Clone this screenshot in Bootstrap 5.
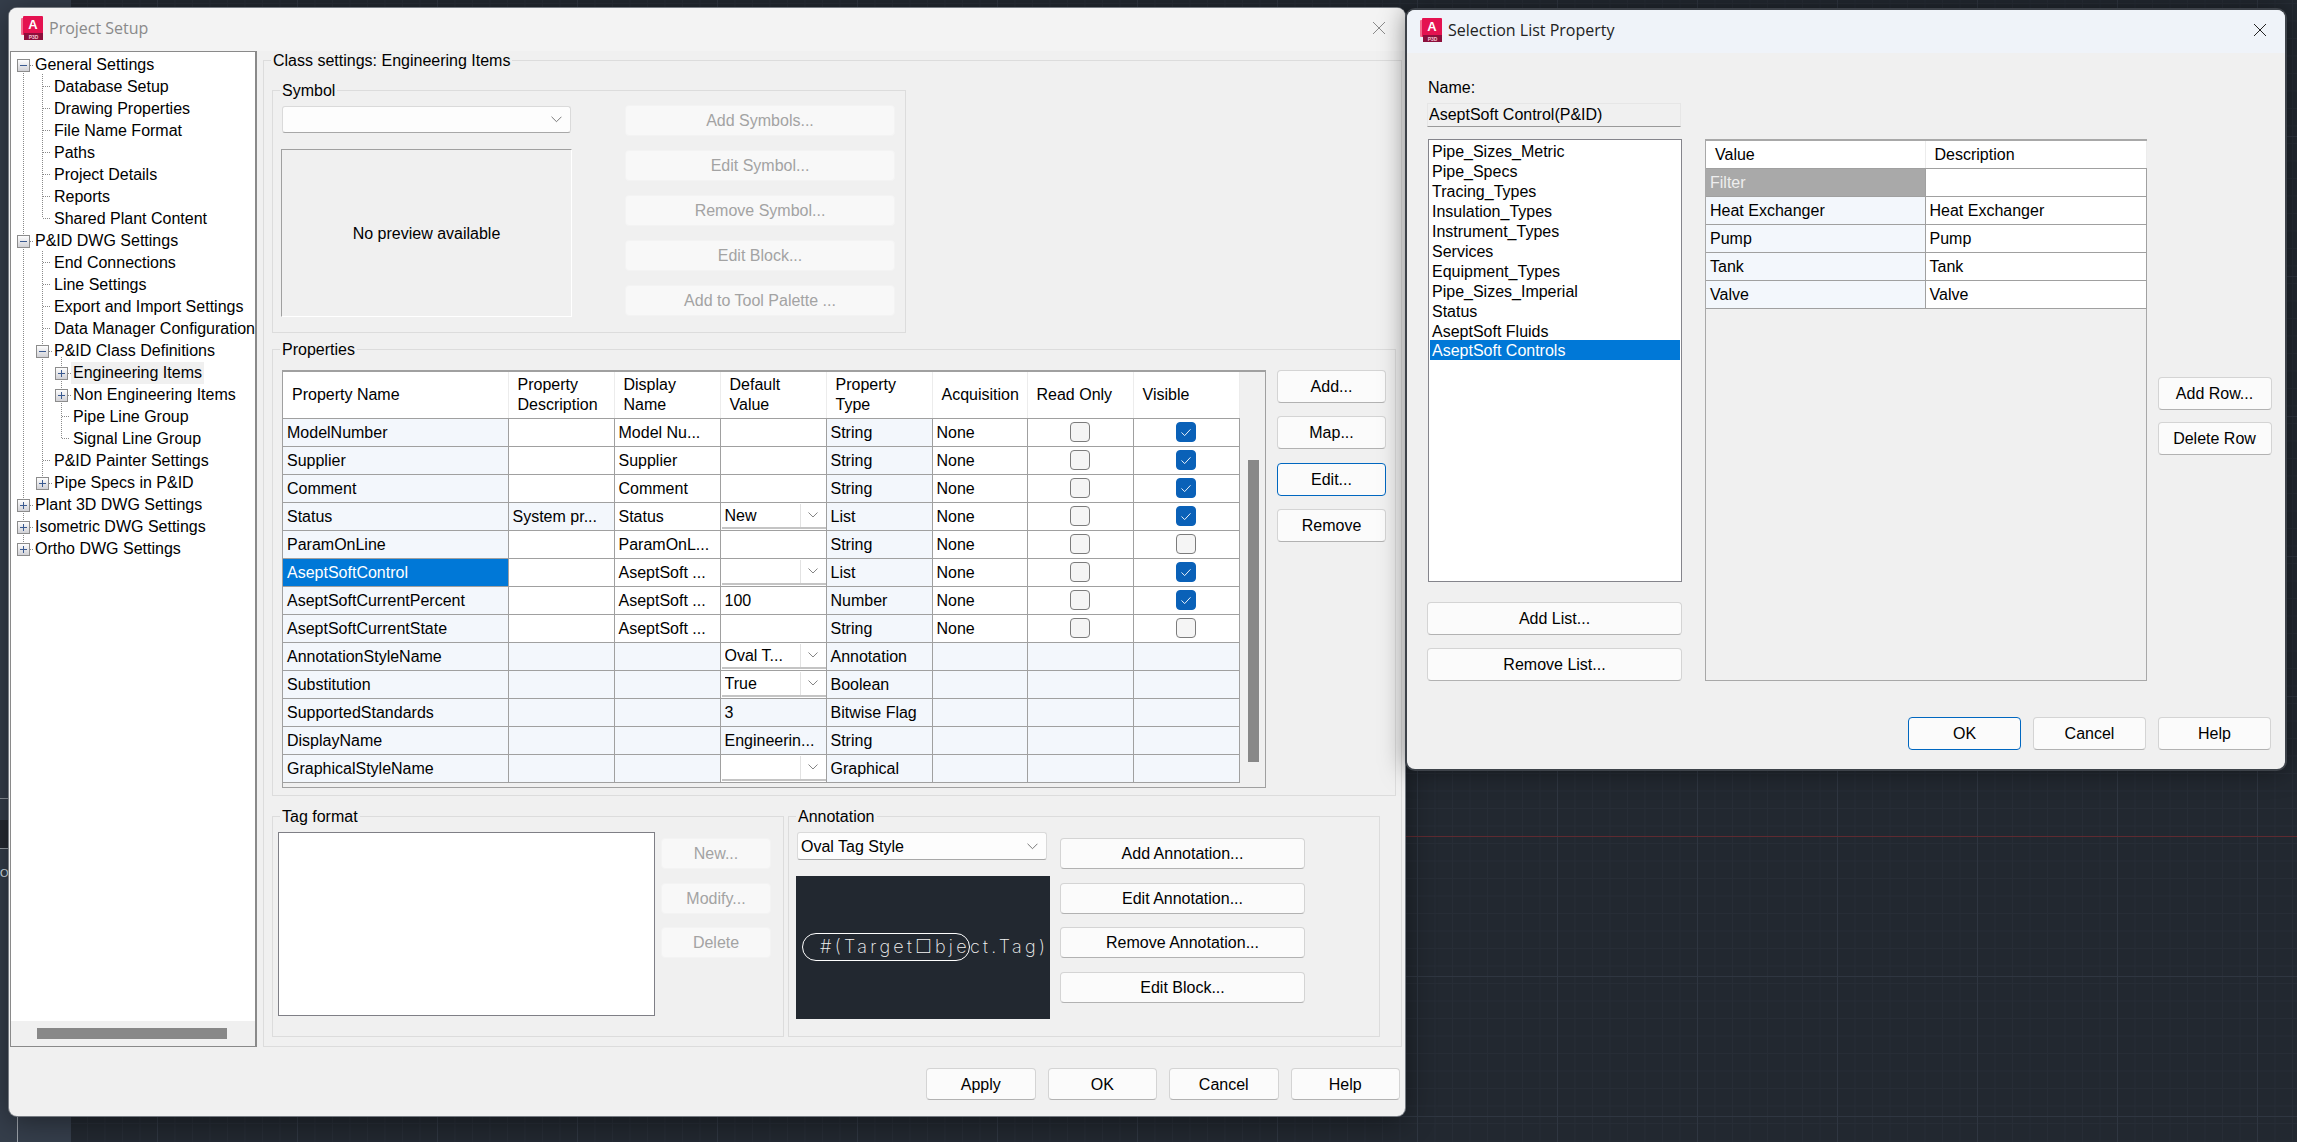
<!DOCTYPE html>
<html>
<head>
    <title>Project Setup</title>
    <link href="https://cdn.jsdelivr.net/npm/bootstrap@5.3.0/dist/css/bootstrap.min.css" rel="stylesheet">
    <style>
        html, body { height: 100%; }
        body {
            margin: 0;
            overflow: hidden;
            position: relative;
            color: #000;
            font: 16px/20px "Liberation Sans", Arial, sans-serif;
            background-color: #222830;
            background-image:
                linear-gradient(#5e2a30, #5e2a30),
                linear-gradient(to right, #2f3641 1px, transparent 1px),
                linear-gradient(#2f3641 1px, transparent 1px),
                linear-gradient(to right, #272d36 1px, transparent 1px),
                linear-gradient(#272d36 1px, transparent 1px);
            background-size: 100% 1px, 140px 140px, 140px 140px, 17.5px 17.5px, 17.5px 17.5px;
            background-position: 0 836px, 17px 0, 0 136px, 17px 0, 0 3px;
            background-repeat: no-repeat, repeat, repeat, repeat, repeat;
        }

        /* cad side strip */
        .strip { position: absolute; left: 0; top: 0; width: 71px; height: 100%; background: #353e4b; }
        .strip i { position: absolute; left: 0; width: 9px; display: block; }
        .strip .dark { top: 820px; height: 29px; background: #252a33; border-bottom: 1px solid #9aa0a8; }
        .strip .rule { top: 798px; height: 1px; background: #8f959d; }
        .strip .zero { top: 864px; color: #dfe8f2; font-style: normal; font-size: 11px; line-height: 18px; }
        .strip .vline { left: 17px; top: 1117px; width: 1px; height: 25px; background: #9aa0a8; }

        /* windows */
        .win { position: absolute; background: #f0f0f0; border-radius: 8px; overflow: hidden; }
        .win-setup { left: 9px; top: 8px; width: 1396px; height: 1108px; box-shadow: 0 0 0 1px #767b82, 0 4px 30px rgba(0,0,0,.45); }
        .win-list { left: 1407px; top: 10px; width: 878px; height: 759px; box-shadow: 0 0 0 2px #3d4249, 0 0 26px rgba(0,0,0,.5); }
        .win-title { height: 43px; display: flex; align-items: center; font: 16px "Open Sans", sans-serif; padding-bottom: 3px !important; }
        .win-setup .win-title { background: #f3f3f3; color: #8a8a8a; padding: 0 19px 0 12px; }
        .win-list .win-title { background: #eff3f9; color: #222; height: 43px; padding: 0 18px 0 13px; }
        .win-title svg.logo { margin-right: 6px; }

        /* group boxes */
        .grp { border: 1px solid #dcdcdc; display: block; }
        .grp > legend { float: none; width: auto; margin: 0 0 -1px 7px; padding: 2px 2px 0; font-size: 16px; line-height: 18px; }
        .grp-class { width: 1139px; height: 997px; margin: -1px 0 0 6px; padding-left: 8px; }
        .grp-class > legend { margin-left: -1px; }
        .grp-symbol { width: 634px; height: 253px; margin-top: 11px; }
        .grp-props { width: 1124px; height: 457px; margin-top: 6px; }
        .grp-tag { width: 512px; height: 231px; }
        .grp-anno { width: 592px; height: 231px; }

        /* tree */
        .tree { position: relative; width: 247px; height: 996px; margin-left: 1px; background: #fff; border: 1px solid #8a8a8a; border-right-width: 2px; padding-top: 2px; }
        .tree-lines { position: absolute; left: -1px; top: -1px; }
        .tree-row { height: 22px; line-height: 22px; white-space: nowrap; }
        .tree-row.l1 { padding-left: 22px; }
        .tree-row.l2 { padding-left: 41px; }
        .tree-row.l3 { padding-left: 60px; }
        .tree-row span { display: inline-block; padding: 0 2px; }
        .tree-row .hot { background: #f0f0f0; }
        .tree-hbar { height: 25px; background: #f0f0f0; margin-top: auto; padding: 7px 0 0 26px; }
        .tree-hbar div { width: 190px; height: 11px; background: #888; }

        /* buttons */
        .btn-win {
            --bs-btn-padding-y: 0;
            --bs-btn-padding-x: 0;
            --bs-btn-font-size: 16px;
            --bs-btn-line-height: 1;
            --bs-btn-border-radius: 4px;
            padding-top: 1px;
            background: #fbfbfb;
            color: #000;
            border: 1px solid #d4d4d4;
            border-bottom-color: #b2b2b2;
            font-family: "Liberation Sans", Arial, sans-serif;
            display: block;
            width: 100%;
            height: 32px;
        }
        .btn-win:disabled { opacity: 1; background: #f8f8f8; color: #a3a3a3; border: 1px solid #f3f3f3; }
        .btn-win.focus { border: 1px solid #0067c0; }
        .col-sym { width: 270px; margin: -1px 0 0 53px; display: flex; flex-direction: column; gap: 14px; }
        .col-sym .btn-win { height: 31px; }
        .col-side { width: 109px; margin-left: 11px; display: flex; flex-direction: column; gap: 13.4px; }
        .col-side .btn-win { height: 33px; }
        .col-tag { width: 110px; margin: 6px 0 0 6px; display: flex; flex-direction: column; gap: 13.5px; }
        .col-anno { width: 245px; margin: 6px 0 0 10px; display: flex; flex-direction: column; gap: 13.5px; }
        .col-tag .btn-win, .col-anno .btn-win { height: 31px; }
        .foot-setup { margin-top: 21px; padding-right: 5px; gap: 12px; }
        .foot-setup .btn-win { width: 109.5px; }
        .foot-list { padding-right: 14px; gap: 12px; }
        .foot-list .btn-win { width: 113px; height: 33px; }

        /* combos */
        .combo {
            --bs-form-select-bg-img: url("data:image/svg+xml,%3csvg xmlns='http://www.w3.org/2000/svg' viewBox='0 0 10 6'%3e%3cpath fill='none' stroke='%23666' stroke-width='.8' d='M.5 .5 5 5 9.5 .5'/%3e%3c/svg%3e");
            font: 16px "Liberation Sans", Arial, sans-serif;
            color: #000;
            background-color: #fdfdfd;
            background-size: 11px 7px;
            background-position: right 8px center;
            border: 1px solid #dadada;
            border-bottom-color: #a8a8a8;
            border-radius: 3px;
            padding: 0 24px 0 3px;
        }
        .combo-sym { width: 289px; height: 27px; margin-left: 1px; }
        .combo-anno { width: 250px; height: 28px; }
        .combo-cell {
            width: 104px;
            height: 25px;
            display: block;
            margin-left: 1px;
            background-image: var(--bs-form-select-bg-img), linear-gradient(#e2e2e2, #e2e2e2);
            background-size: 10px 6px, 1px 100%;
            background-position: right 8px center, right 25px top;
            background-repeat: no-repeat;
            background-color: #fff;
            border: 0;
            border-bottom: 2px solid #c4c4c4;
            border-radius: 0;
        }

        /* previews */
        .sym-preview { width: 291px; height: 168px; margin-top: 16px; padding-top: 2px; border: 1px solid #fff; border-top-color: #a0a0a0; border-left-color: #a0a0a0; }
        .tag-preview { width: 254px; height: 143px; margin: 16px 0 0 -1px; background: #222830; display: block; }
        .tag-list { width: 377px; height: 184px; background: #fff; border: 1px solid #7f7f86; }

        /* property grids */
        .grid-wrap { width: 984px; height: 418px; border: 1px solid #a0a0a0; border-top-width: 2px; background: #f0f0f0; }
        .scroll-thumb { width: 11px; height: 302px; margin: 88px 0 0 8px; background: #888; flex: none; }
        .grid-table { table-layout: fixed; width: 956px; margin: 0; border-collapse: collapse; flex: none; }
        .grid-table th, .grid-table td {
            padding: 1px 4px 0;
            height: 28px;
            line-height: 26px;
            font-weight: 400;
            color: #000;
            white-space: nowrap;
            overflow: hidden;
            background-color: #fff;
            border: 1px solid #a0a0a0;
            box-shadow: none;
            vertical-align: middle;
        }
        .grid-table th { height: 46px; line-height: 20px; padding-left: 9px; border-color: #ececec; border-bottom-color: #a0a0a0; border-top: 0; }
        .grid-table th:first-child, .grid-table td:first-child { border-left: 0; }
        .grid-table td.ro { background-color: #f3f7fc; }
        .grid-table td.sel { background-color: #0078d7; color: #fff; }
        .grid-table td.filter { background-color: #a9a9a9; color: #eee; }
        .grid-table td.cmb { padding: 0; }
        .grid-table td.chk { padding: 0; text-align: center; line-height: 20px; }
        .chk .form-check-input { width: 20px; height: 20px; margin: -2px 0 0 0; vertical-align: middle; border: 1px solid #7c7c7c; border-radius: 4px; background-color: #f5f5f5; }
        .chk .form-check-input:checked {
            background-color: #0a61b8;
            border-color: #0a61b8;
            --bs-form-check-bg-image: url("data:image/svg+xml,%3csvg xmlns='http://www.w3.org/2000/svg' viewBox='0 0 20 20'%3e%3cpath fill='none' stroke='%23fff' stroke-width='1' d='M5 10.5 8.5 14 15 7'/%3e%3c/svg%3e");
        }
        .grid-list { width: 441.5px; height: 541.5px; margin: 86px 0 0 23px; border: 1px solid #a8a8a8; border-top-width: 2px; }
        .grid-list .grid-table { width: 440px; }
        .grid-list th { height: 27px; line-height: 24px; padding-left: 9px; }

        /* selection list dialog */
        .list-col { width: 254px; margin-left: 21px; padding-top: 25px; }
        .name-input { height: 24px; margin: 5px 0 0 -1px; padding: 0 1px; font: 16px "Liberation Sans", Arial, sans-serif; color: #000; background: #f0f0f0; border: 1px solid #e6e6e6; border-bottom-color: #9a9a9a; border-radius: 0; }
        .name-input:focus { background: #f0f0f0; box-shadow: none; border-color: #e6e6e6; border-bottom-color: #9a9a9a; }
        .pick-list { height: 443px; margin: 12px 0 20px; padding: 1px; background: #fff; border: 1px solid #85858c; border-radius: 0; display: block; }
        .pick-list .list-group-item { height: 20px; line-height: 22px; padding: 0 2px; border: 0; border-radius: 0; background: transparent; color: #000; }
        .pick-list .list-group-item.active { background: #0078d7; color: #fff; }
        .list-btns { margin-left: -1px; width: 255px; display: flex; flex-direction: column; gap: 12.5px; }
        .list-btns .btn-win { height: 33px; }
        .row-btns { width: 114px; margin: 324px 0 0 11px; display: flex; flex-direction: column; gap: 12.5px; }
        .row-btns .btn-win { height: 32.5px; }
        .list-body { height: 664px; }
    </style>
</head>
<body>
    <!-- cad background bits -->
    <div class="strip">
        <i class="rule"></i>
        <i class="dark"></i>
        <i class="zero">O</i>
        <i class="vline"></i>
    </div>

    <!-- Project Setup window -->
    <div class="win win-setup">
        <div class="win-title">
            <svg class="logo" width="22" height="24" viewBox="0 0 22 24"><use href="#appLogo"/></svg>
            Project Setup
            <svg class="ms-auto" width="14" height="14" viewBox="0 0 14 14"><path d="M1 1 13 13M13 1 1 13" stroke="#8a8a8a" fill="none"/></svg>
        </div>
        <div class="d-flex">
            <div class="tree d-flex flex-column">
                <div id="treeRows"></div>
                <div class="tree-hbar"><div></div></div>
                <svg class="tree-lines" width="247" height="996" viewBox="10 51 247 996">
                    <defs>
                        <linearGradient id="boxFill" x1="0" y1="0" x2="0" y2="1"><stop offset="0" stop-color="#fff"/><stop offset="1" stop-color="#cfcfd4"/></linearGradient>
                        <g id="boxMinus"><rect x=".5" y=".5" width="12" height="12" fill="url(#boxFill)" stroke="#8c8c8c"/><path d="M3 6.5h7" stroke="#3a5a90"/></g>
                        <g id="boxPlus"><rect x=".5" y=".5" width="12" height="12" fill="url(#boxFill)" stroke="#8c8c8c"/><path d="M3 6.5h7M6.5 3v7" stroke="#3a5a90"/></g>
                        <g id="appLogo">
                            <rect x="0" y="2" width="6" height="17" rx="1" fill="#f36a8d"/>
                            <rect x="2" y="0" width="20" height="19" rx="1" fill="#e41250"/>
                            <rect x="3" y="17" width="19" height="7" fill="#8d0f3c"/>
                            <text x="12" y="13" text-anchor="middle" font-family="Liberation Sans, sans-serif" font-weight="700" font-size="13" fill="#fff">A</text>
                            <text x="12.5" y="22.5" text-anchor="middle" font-family="Liberation Sans, sans-serif" font-weight="700" font-size="5" fill="#f5c6d4">P3D</text>
                        </g>
                    </defs>
                    <path shape-rendering="crispEdges" fill="none" stroke="#8a8a8a" stroke-dasharray="1 1"
                        d="M23.5 71V544 M42.5 74V218 M42.5 251V477 M61.5 357V438
                           M43 86.5h7M43 108.5h7M43 130.5h7M43 152.5h7M43 174.5h7M43 196.5h7M43 218.5h7
                           M43 262.5h7M43 284.5h7M43 306.5h7M43 328.5h7M43 460.5h7
                           M62 416.5h7M62 438.5h7
                           M30 65.5h4M30 241.5h4M30 505.5h4M30 527.5h4M30 549.5h4M49 351.5h4M49 483.5h4M68 373.5h3M68 395.5h3"/>
                    <use href="#boxMinus" x="17" y="59"/>
                    <use href="#boxMinus" x="17" y="235"/>
                    <use href="#boxPlus" x="17" y="499"/>
                    <use href="#boxPlus" x="17" y="521"/>
                    <use href="#boxPlus" x="17" y="543"/>
                    <use href="#boxMinus" x="36" y="345"/>
                    <use href="#boxPlus" x="36" y="477"/>
                    <use href="#boxPlus" x="55" y="367"/>
                    <use href="#boxPlus" x="55" y="389"/>
                </svg>
            </div>

            <fieldset class="grp grp-class">
                <legend>Class settings: Engineering Items</legend>

                <fieldset class="grp grp-symbol">
                    <legend>Symbol</legend>
                    <div class="d-flex" style="padding: 7px 0 0 8px">
                        <div>
                            <select class="form-select combo combo-sym"><option></option></select>
                            <div class="sym-preview d-flex align-items-center justify-content-center">No preview available</div>
                        </div>
                        <div class="col-sym">
                            <button class="btn btn-win" disabled>Add Symbols...</button>
                            <button class="btn btn-win" disabled>Edit Symbol...</button>
                            <button class="btn btn-win" disabled>Remove Symbol...</button>
                            <button class="btn btn-win" disabled>Edit Block...</button>
                            <button class="btn btn-win" disabled>Add to Tool Palette ...</button>
                        </div>
                    </div>
                </fieldset>

                <fieldset class="grp grp-props">
                    <legend>Properties</legend>
                    <div class="d-flex" style="padding: 12px 0 0 9px">
                        <div class="grid-wrap d-flex align-items-start">
                            <table class="table grid-table">
                                <colgroup>
                                    <col style="width: 225px"><col style="width: 106px"><col style="width: 106px"><col style="width: 106px">
                                    <col style="width: 106px"><col style="width: 95px"><col style="width: 106px"><col style="width: 106px">
                                </colgroup>
                                <thead>
                                    <tr>
                                        <th>Property Name</th>
                                        <th>Property<br>Description</th>
                                        <th>Display<br>Name</th>
                                        <th>Default<br>Value</th>
                                        <th>Property<br>Type</th>
                                        <th>Acquisition</th>
                                        <th>Read Only</th>
                                        <th>Visible</th>
                                    </tr>
                                </thead>
                                <tbody id="propRows"></tbody>
                            </table>
                            <div class="scroll-thumb"></div>
                        </div>
                        <div class="col-side">
                            <button class="btn btn-win">Add...</button>
                            <button class="btn btn-win">Map...</button>
                            <button class="btn btn-win focus">Edit...</button>
                            <button class="btn btn-win">Remove</button>
                        </div>
                    </div>
                </fieldset>

                <div class="d-flex gap-1" style="margin-top: 10px">
                    <fieldset class="grp grp-tag">
                        <legend>Tag format</legend>
                        <div class="d-flex" style="padding: 7px 0 0 5px">
                            <div class="tag-list"></div>
                            <div class="col-tag">
                                <button class="btn btn-win" disabled>New...</button>
                                <button class="btn btn-win" disabled>Modify...</button>
                                <button class="btn btn-win" disabled>Delete</button>
                            </div>
                        </div>
                    </fieldset>
                    <fieldset class="grp grp-anno">
                        <legend>Annotation</legend>
                        <div class="d-flex" style="padding: 7px 0 0 8px">
                            <div>
                                <select class="form-select combo combo-anno"><option>Oval Tag Style</option></select>
                                <svg class="tag-preview" viewBox="796 875 254 143">
                                    <rect x="802.5" y="932.5" width="167" height="27" rx="13.5" fill="none" stroke="#fff"/>
                                    <text x="820" y="952" font-family="Inter, sans-serif" font-weight="200" font-size="18" fill="#f2f2f2" textLength="225" lengthAdjust="spacing">#(Target□bject.Tag)</text>
                                </svg>
                            </div>
                            <div class="col-anno">
                                <button class="btn btn-win">Add Annotation...</button>
                                <button class="btn btn-win">Edit Annotation...</button>
                                <button class="btn btn-win">Remove Annotation...</button>
                                <button class="btn btn-win">Edit Block...</button>
                            </div>
                        </div>
                    </fieldset>
                </div>
            </fieldset>
        </div>
        <div class="d-flex justify-content-end foot-setup">
            <button class="btn btn-win">Apply</button>
            <button class="btn btn-win">OK</button>
            <button class="btn btn-win">Cancel</button>
            <button class="btn btn-win">Help</button>
        </div>
    </div>

    <!-- Selection List Property window -->
    <div class="win win-list">
        <div class="win-title">
            <svg class="logo" width="22" height="24" viewBox="0 0 22 24"><use href="#appLogo"/></svg>
            Selection List Property
            <svg class="ms-auto" width="14" height="14" viewBox="0 0 14 14"><path d="M1 1 13 13M13 1 1 13" stroke="#222" fill="none"/></svg>
        </div>
        <div class="d-flex list-body">
            <div class="list-col">
                <div>Name:</div>
                <input class="form-control name-input" type="text" value="AseptSoft Control(P&amp;ID)" readonly>
                <ul class="list-group pick-list" id="pickList"></ul>
                <div class="list-btns">
                    <button class="btn btn-win">Add List...</button>
                    <button class="btn btn-win">Remove List...</button>
                </div>
            </div>
            <div class="grid-list">
                <table class="table grid-table">
                    <colgroup><col style="width: 219px"><col style="width: 221px"></colgroup>
                    <thead><tr><th>Value</th><th>Description</th></tr></thead>
                    <tbody id="valueRows"></tbody>
                </table>
            </div>
            <div class="row-btns">
                <button class="btn btn-win">Add Row...</button>
                <button class="btn btn-win">Delete Row</button>
            </div>
        </div>
        <div class="d-flex justify-content-end foot-list">
            <button class="btn btn-win focus">OK</button>
            <button class="btn btn-win">Cancel</button>
            <button class="btn btn-win">Help</button>
        </div>
    </div>

    <script src="https://cdn.jsdelivr.net/npm/bootstrap@5.3.0/dist/js/bootstrap.bundle.min.js"></script>
    <script>
        const treeItems = [
            [1, "General Settings"], [2, "Database Setup"], [2, "Drawing Properties"], [2, "File Name Format"],
            [2, "Paths"], [2, "Project Details"], [2, "Reports"], [2, "Shared Plant Content"],
            [1, "P&amp;ID DWG Settings"], [2, "End Connections"], [2, "Line Settings"], [2, "Export and Import Settings"],
            [2, "Data Manager Configuration"], [2, "P&amp;ID Class Definitions"], [3, "Engineering Items"], [3, "Non Engineering Items"],
            [3, "Pipe Line Group"], [3, "Signal Line Group"], [2, "P&amp;ID Painter Settings"], [2, "Pipe Specs in P&amp;ID"],
            [1, "Plant 3D DWG Settings"], [1, "Isometric DWG Settings"], [1, "Ortho DWG Settings"]
        ];
        document.getElementById("treeRows").innerHTML = treeItems.map(([level, text]) => {
            const hot = text === "Engineering Items" ? "hot" : "";
            return `<div class="tree-row l${level}"><span class="${hot}">${text}</span></div>`;
        }).join("");

        // name, description, display name, default, type, acquisition, read only, visible
        const props = [
            ["ModelNumber", "", "Model Nu...", "", "String", "None", 0, 1],
            ["Supplier", "", "Supplier", "", "String", "None", 0, 1],
            ["Comment", "", "Comment", "", "String", "None", 0, 1],
            ["Status", "System pr...", "Status", ["New"], "List", "None", 0, 1],
            ["ParamOnLine", "", "ParamOnL...", "", "String", "None", 0, 0],
            ["AseptSoftControl", "", "AseptSoft ...", [""], "List", "None", 0, 1],
            ["AseptSoftCurrentPercent", "", "AseptSoft ...", "100", "Number", "None", 0, 1],
            ["AseptSoftCurrentState", "", "AseptSoft ...", "", "String", "None", 0, 0],
            ["AnnotationStyleName", "", "", ["Oval T..."], "Annotation"],
            ["Substitution", "", "", ["True"], "Boolean"],
            ["SupportedStandards", "", "", "3", "Bitwise Flag"],
            ["DisplayName", "", "", "Engineerin...", "String"],
            ["GraphicalStyleName", "", "", [""], "Graphical"]
        ];
        function checkCell(on) {
            return `<td class="chk"><input class="form-check-input" type="checkbox" ${on ? "checked" : ""}></td>`;
        }
        document.getElementById("propRows").innerHTML = props.map(p => {
            const locked = p.length === 5;
            const nameClass = p[0] === "AseptSoftControl" ? "sel" : "ro";
            const descClass = locked || p[1] ? "ro" : "";
            const defCell = Array.isArray(p[3])
                ? `<td class="cmb"><select class="form-select combo combo-cell"><option>${p[3][0]}</option></select></td>`
                : `<td class="${locked ? "ro" : ""}">${p[3]}</td>`;
            const tail = locked
                ? `<td class="ro"></td><td class="ro"></td><td class="ro"></td>`
                : `<td>${p[5]}</td>${checkCell(p[6])}${checkCell(p[7])}`;
            return `<tr><td class="${nameClass}">${p[0]}</td><td class="${descClass}">${p[1]}</td>` +
                `<td class="${locked ? "ro" : ""}">${p[2]}</td>${defCell}<td class="ro">${p[4]}</td>${tail}</tr>`;
        }).join("");

        const lists = ["Pipe_Sizes_Metric", "Pipe_Specs", "Tracing_Types", "Insulation_Types", "Instrument_Types", "Services",
            "Equipment_Types", "Pipe_Sizes_Imperial", "Status", "AseptSoft Fluids", "AseptSoft Controls"];
        document.getElementById("pickList").innerHTML = lists.map(name =>
            `<li class="list-group-item ${name === "AseptSoft Controls" ? "active" : ""}">${name}</li>`).join("");

        const values = ["Heat Exchanger", "Pump", "Tank", "Valve"];
        document.getElementById("valueRows").innerHTML = `<tr><td class="filter">Filter</td><td></td></tr>` +
            values.map(v => `<tr><td class="ro">${v}</td><td>${v}</td></tr>`).join("");
    </script>
</body>
</html>
